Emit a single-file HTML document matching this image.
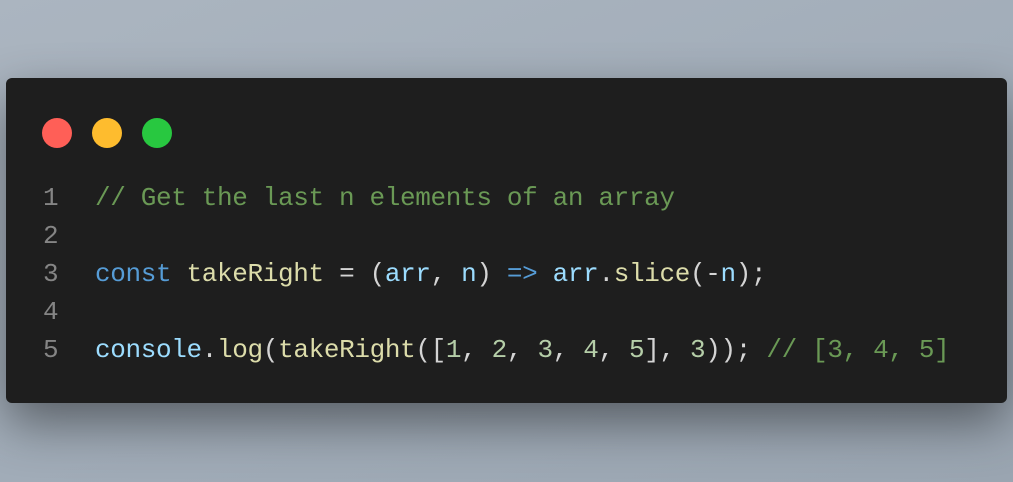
<!DOCTYPE html>
<html><head><style>
html,body{margin:0;width:1013px;height:482px;overflow:hidden}
body{background:linear-gradient(160deg,#abb5c0 0%,#a2adb9 50%,#9aa5b1 100%);position:relative;font-family:"Liberation Mono",monospace}
.card{position:absolute;left:6px;top:78px;width:1001px;height:325px;background:#1e1e1e;border-radius:6px;box-shadow:0 20px 50px rgba(0,0,0,0.45)}
.dot{position:absolute;top:40px;width:30px;height:30px;border-radius:50%}
.code{position:absolute;left:0;top:101px;font-size:26px;letter-spacing:-0.35px;line-height:38px;color:#d4d4d4}
.row{position:relative;height:38px}
.ln{position:absolute;left:37px;color:#858585}
.tx{position:absolute;left:89px;white-space:pre}
.c{color:#6a9955}.k{color:#569cd6}.f{color:#dcdcaa}.v{color:#9cdcfe}.n{color:#b5cea8}
</style></head><body>
<div class="card">
<div class="dot" style="left:36px;background:#ff5f57"></div>
<div class="dot" style="left:86px;background:#febc2e"></div>
<div class="dot" style="left:136px;background:#28c840"></div>
<div class="code"><div class="row"><span class="ln">1</span><span class="tx"><span class="c">// Get the last n elements of an array</span></span></div><div class="row"><span class="ln">2</span></div><div class="row"><span class="ln">3</span><span class="tx"><span class="k">const</span> <span class="f">takeRight</span> = (<span class="v">arr</span>, <span class="v">n</span>) <span class="k">=&gt;</span> <span class="v">arr</span>.<span class="f">slice</span>(-<span class="v">n</span>);</span></div><div class="row"><span class="ln">4</span></div><div class="row"><span class="ln">5</span><span class="tx"><span class="v">console</span>.<span class="f">log</span>(<span class="f">takeRight</span>([<span class="n">1</span>, <span class="n">2</span>, <span class="n">3</span>, <span class="n">4</span>, <span class="n">5</span>], <span class="n">3</span>)); <span class="c">// [3, 4, 5]</span></span></div></div>
</div>
</body></html>
